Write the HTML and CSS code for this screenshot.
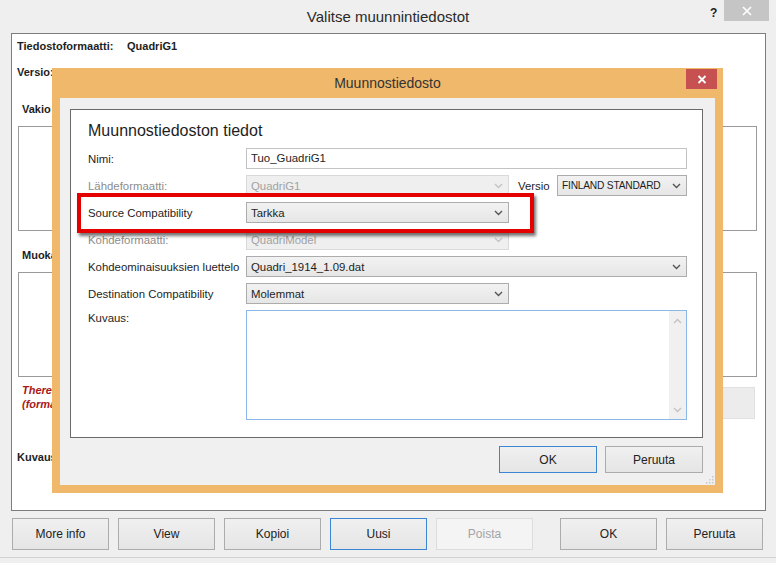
FILE: index.html
```html
<!DOCTYPE html>
<html lang="fi">
<head>
<meta charset="utf-8">
<title>Valitse muunnintiedostot</title>
<link rel="stylesheet" href="styles.css">
</head>
<body>
<div class="window">
  <div class="titlebar">
    <span class="title">Valitse muunnintiedostot</span>
    <span class="help">?</span>
    <span class="close"><svg width="10" height="10" viewBox="0 0 10 10"><path d="M1 1L9 9M9 1L1 9" stroke="#fff" stroke-width="1.6"/></svg></span>
  </div>

  <div class="panel">
    <div class="info first"><b class="key">Tiedostoformaatti:</b><b>QuadriG1</b></div>
    <div class="info version"><b>Versio:</b></div>
    <div class="group-label">Vakio</div>
    <div class="listbox lb1"></div>
    <div class="group-label muok">Muokatut</div>
    <div class="listbox lb2"></div>
    <div class="warn-row">
      <p class="warn">There are no conversion files<br>(format)</p>
      <div class="gbtn"></div>
    </div>
    <div class="info kuvaus"><b>Kuvaus:</b></div>
  </div>

  <div class="buttons">
    <button class="btn">More info</button>
    <button class="btn">View</button>
    <button class="btn">Kopioi</button>
    <button class="btn focus">Uusi</button>
    <button class="btn disabled">Poista</button>
    <button class="btn ok">OK</button>
    <button class="btn">Peruuta</button>
  </div>

  <div class="dialog">
    <div class="dtitle">
      <span>Muunnostiedosto</span>
      <span class="dclose"><svg width="10" height="9" viewBox="0 0 10 9"><path d="M1.5 1L8.5 8M8.5 1L1.5 8" stroke="#fff" stroke-width="1.8"/></svg></span>
    </div>
    <div class="dclient">
      <div class="fpanel">
        <h1 class="heading">Muunnostiedoston tiedot</h1>
        <div class="form">
          <label class="lbl">Nimi:</label>
          <div class="input">Tuo_GuadriG1</div>

          <label class="lbl dis">Lähdeformaatti:</label>
          <div class="fieldrow">
            <div class="select short disabled"><span>QuadriG1</span><svg class="chev" width="9" height="6" viewBox="0 0 9 6"><path d="M1 1L4.5 4.5L8 1" fill="none" stroke="#c4c4c4" stroke-width="1.4"/></svg></div>
            <label class="lbl versio">Versio</label>
            <div class="select ver"><span>FINLAND STANDARD</span><svg class="chev" width="9" height="6" viewBox="0 0 9 6"><path d="M1 1L4.5 4.5L8 1" fill="none" stroke="#555" stroke-width="1.4"/></svg></div>
          </div>

          <label class="lbl">Source Compatibility</label>
          <div class="select short"><span>Tarkka</span><svg class="chev" width="9" height="6" viewBox="0 0 9 6"><path d="M1 1L4.5 4.5L8 1" fill="none" stroke="#555" stroke-width="1.4"/></svg></div>

          <label class="lbl dis">Kohdeformaatti:</label>
          <div class="select short disabled"><span>QuadriModel</span><svg class="chev" width="9" height="6" viewBox="0 0 9 6"><path d="M1 1L4.5 4.5L8 1" fill="none" stroke="#c4c4c4" stroke-width="1.4"/></svg></div>

          <label class="lbl">Kohdeominaisuuksien luettelo</label>
          <div class="select"><span>Quadri_1914_1.09.dat</span><svg class="chev" width="9" height="6" viewBox="0 0 9 6"><path d="M1 1L4.5 4.5L8 1" fill="none" stroke="#555" stroke-width="1.4"/></svg></div>

          <label class="lbl">Destination Compatibility</label>
          <div class="select short"><span>Molemmat</span><svg class="chev" width="9" height="6" viewBox="0 0 9 6"><path d="M1 1L4.5 4.5L8 1" fill="none" stroke="#555" stroke-width="1.4"/></svg></div>

          <label class="lbl top">Kuvaus:</label>
          <div class="textarea">
            <div class="scroll">
              <svg width="9" height="6" viewBox="0 0 9 6"><path d="M1 5L4.5 1.5L8 5" fill="none" stroke="#c2c2c2" stroke-width="1.3"/></svg>
              <svg width="9" height="6" viewBox="0 0 9 6"><path d="M1 1L4.5 4.5L8 1" fill="none" stroke="#c2c2c2" stroke-width="1.3"/></svg>
            </div>
          </div>
        </div>
        <div class="highlight"></div>
      </div>
      <div class="dbuttons">
        <button class="btn dbtn ok-default">OK</button>
        <button class="btn dbtn">Peruuta</button>
      </div>
      <svg class="grip" width="8" height="8" viewBox="0 0 8 8"><g fill="#c8c8c8"><rect x="6" y="0" width="1.5" height="1.5"/><rect x="3" y="3" width="1.5" height="1.5"/><rect x="6" y="3" width="1.5" height="1.5"/><rect x="0" y="6" width="1.5" height="1.5"/><rect x="3" y="6" width="1.5" height="1.5"/><rect x="6" y="6" width="1.5" height="1.5"/></g></svg>
    </div>
  </div>
</div>
</body>
</html>
```

FILE: styles.css
```css
* { box-sizing: border-box; }

html, body {
  margin: 0;
  padding: 0;
}

body {
  width: 776px;
  height: 563px;
  overflow: hidden;
  background: #efefef;
  font-family: "Liberation Sans", Arial, sans-serif;
  color: #1e1e1e;
}

.window {
  position: relative;
  width: 776px;
  height: 558px;
  background: #efefef;
  border-bottom: 1px solid #d2d2d2;
}

/* ---------- outer title bar ---------- */
.titlebar {
  position: relative;
  height: 33px;
  display: flex;
  justify-content: center;
  align-items: flex-start;
}

.title {
  font-size: 15px;
  color: #2a2a2a;
  margin-top: 8px;
}

.help {
  position: absolute;
  left: 710px;
  top: 6px;
  font-size: 12px;
  font-weight: bold;
  color: #222;
}

.close {
  position: absolute;
  left: 724px;
  top: 0;
  width: 45px;
  height: 21px;
  background: #c5c5c5;
  display: flex;
  align-items: center;
  justify-content: center;
}

/* ---------- outer panel (behind dialog) ---------- */
.panel {
  margin: 0 10px 0 11px;
  height: 478px;
  background: #fff;
  border: 1px solid #7d7d7d;
  padding: 5px 7px 0 5px;
}

.info {
  font-size: 11px;
  line-height: 14px;
  display: flex;
}

.info .key { width: 110px; }

.version { margin-top: 12px; }

.group-label {
  font-size: 11px;
  font-weight: bold;
  line-height: 14px;
  margin-top: 23px;
  padding-left: 5px;
}

.group-label.muok { margin-top: 17px; }

.listbox {
  margin: 10px 1px 0 1px;
  height: 105px;
  border: 1px solid #9a9a9a;
  background: #fff;
}

.warn-row {
  display: flex;
  justify-content: space-between;
  align-items: flex-start;
  margin-top: 6px;
  padding-left: 5px;
}

.warn {
  margin: 0;
  font-size: 11px;
  line-height: 14px;
  font-weight: bold;
  font-style: italic;
  color: #a81818;
}

.gbtn {
  width: 160px;
  height: 32px;
  margin-top: 4px;
  margin-right: 3px;
  background: #ececec;
  border: 1px solid #e0e0e0;
}

.kuvaus { margin-top: 31px; }

/* ---------- bottom buttons ---------- */
.buttons {
  display: flex;
  gap: 9px;
  padding: 7px 12px 0 12px;
}

.btn {
  width: 97px;
  height: 32px;
  font-family: "Liberation Sans", Arial, sans-serif;
  font-size: 12px;
  color: #222;
  background: linear-gradient(#f0f0f0, #e5e5e5);
  border: 1px solid #acacac;
  padding: 0;
}

.btn.focus { border-color: #3c84d4; }

.btn.disabled {
  background: #f4f4f4;
  border-color: #dcdcdc;
  color: #a3a3a3;
}

.btn.ok { margin-left: 18px; }

/* ---------- dialog window ---------- */
.dialog {
  position: absolute;
  left: 52px;
  top: 68px;
  width: 671px;
  height: 425px;
  background: #f0b86b;
  padding: 0 8px 8px 8px;
  display: flex;
  flex-direction: column;
}

.dtitle {
  position: relative;
  height: 30px;
  display: flex;
  align-items: center;
  justify-content: center;
  font-size: 14px;
  color: #333;
}

.dclose {
  position: absolute;
  right: -2px;
  top: 1px;
  width: 31px;
  height: 20px;
  background: #c75050;
  display: flex;
  align-items: center;
  justify-content: center;
}

.dclient {
  position: relative;
  flex: 1;
  background: #f0f0f0;
  padding: 11px 12px 0 10px;
}

.fpanel {
  position: relative;
  height: 329px;
  background: #fff;
  border: 1px solid #6a6a6a;
  padding: 11px 0 0 17px;
}

.heading {
  margin: 0;
  font-size: 16px;
  line-height: 20px;
  font-weight: normal;
  color: #1e1e1e;
}

.form {
  margin-top: 7px;
  display: grid;
  grid-template-columns: 158px 441px;
  grid-auto-rows: 21px;
  row-gap: 6px;
  align-items: center;
}

.lbl {
  font-size: 11.4px;
  color: #1e1e1e;
  white-space: nowrap;
}

.lbl.dis { color: #8c8c8c; }

.lbl.top {
  align-self: start;
  padding-top: 2px;
}

.input {
  height: 21px;
  border: 1px solid #c3c3c3;
  background: #fff;
  font-size: 11.4px;
  line-height: 19px;
  padding-left: 4px;
}

.fieldrow {
  display: flex;
  align-items: center;
}

.versio {
  margin-left: 9px;
  width: 39px;
}

.select {
  height: 21px;
  display: flex;
  align-items: center;
  justify-content: space-between;
  border: 1px solid #acacac;
  background: linear-gradient(#f2f2f2, #e6e6e6);
  font-size: 11.4px;
  white-space: nowrap;
  padding: 0 5px 0 4px;
}

.select.short { width: 263px; }

.select.ver {
  width: 130px;
  font-size: 10.2px;
  letter-spacing: -0.2px;
}

.select.disabled {
  background: #efefef;
  border-color: #d9d9d9;
  color: #a2a2a2;
}

.textarea {
  grid-row: span 5;
  height: 110px;
  align-self: start;
  border: 1px solid #8ab8e6;
  background: #fff;
  display: flex;
  justify-content: flex-end;
}

.scroll {
  width: 17px;
  height: 100%;
  background: #f0f0f0;
  display: flex;
  flex-direction: column;
  justify-content: space-between;
  align-items: center;
  padding: 7px 0 6px;
}

.highlight {
  position: absolute;
  left: 6px;
  top: 83px;
  width: 457px;
  height: 40px;
  border: 4px solid #e50000;
  box-shadow: 2px 3px 3px rgba(0, 0, 0, 0.55);
}

.dbuttons {
  display: flex;
  justify-content: flex-end;
  gap: 8px;
  margin-top: 8px;
}

.dbtn {
  width: 98px;
  height: 27px;
}

.ok-default { border-color: #3c84d4; }

.grip {
  position: absolute;
  right: 1px;
  bottom: 1px;
}
```
